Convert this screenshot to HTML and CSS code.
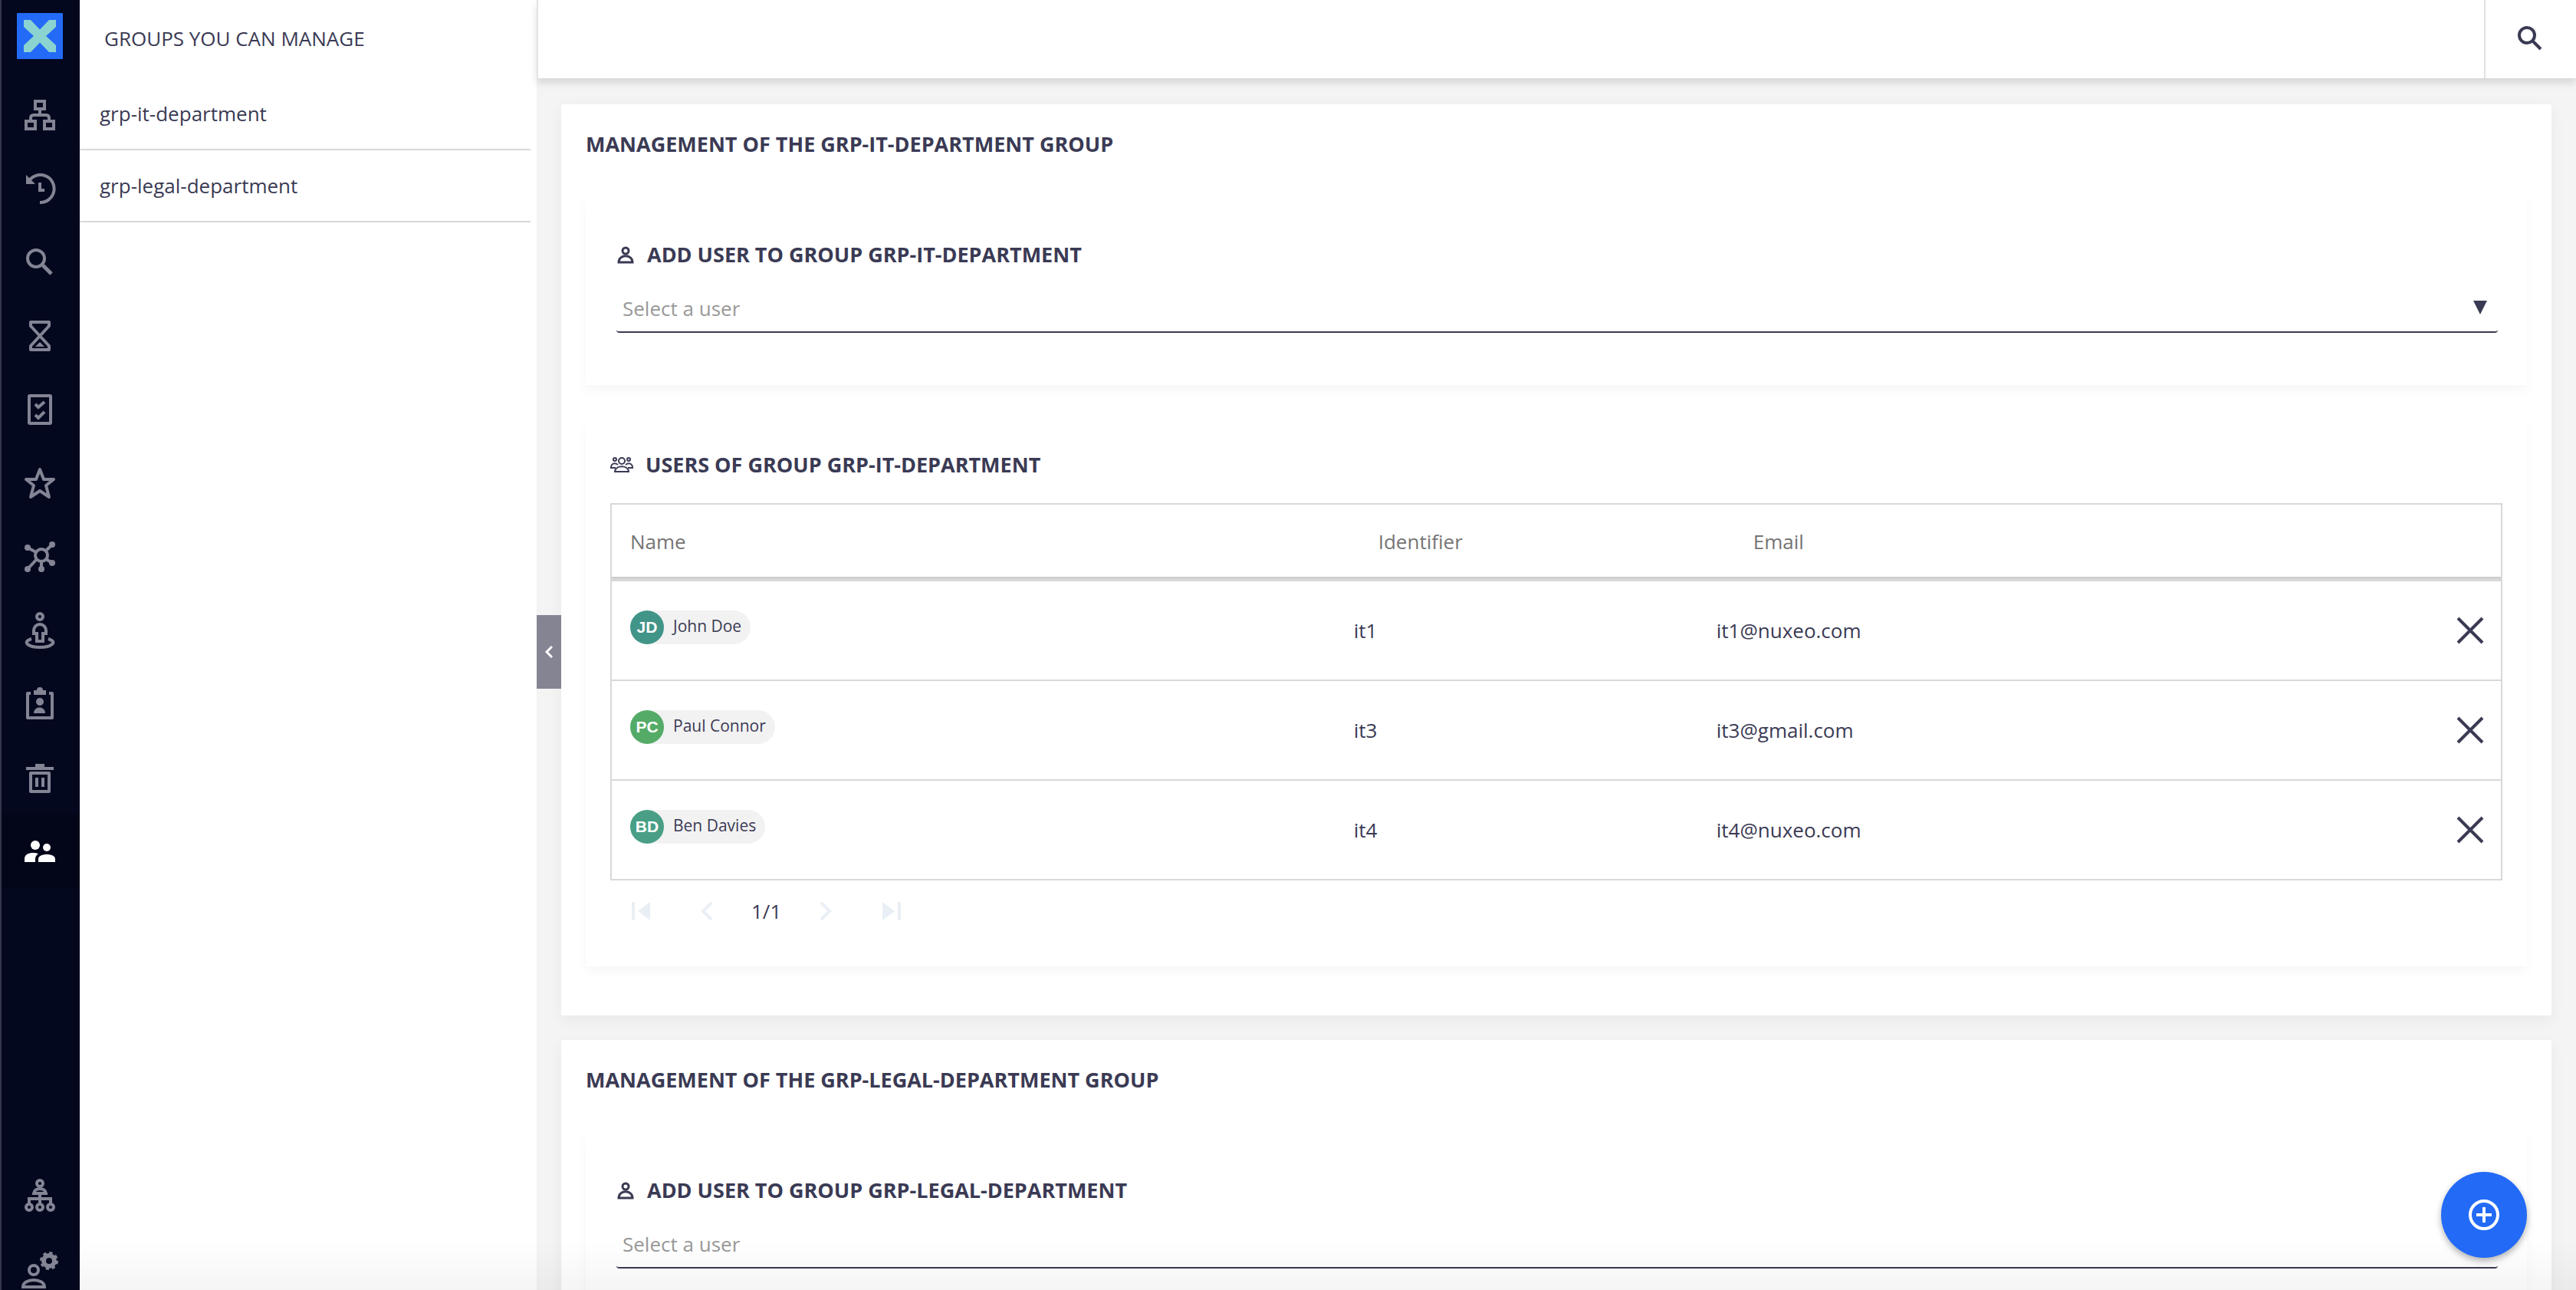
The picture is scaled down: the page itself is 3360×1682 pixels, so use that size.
FILE: index.html
```html
<!DOCTYPE html>
<html lang="en">
<head>
<meta charset="utf-8">
<title>Group management</title>
<link rel="stylesheet" href="styles.css">
</head>
<body>
<div class="app">
  <nav class="rail" aria-label="Main">
    <a class="rail-logo" href="#" aria-label="Home">
      <svg class="logo" viewBox="0 0 60 60"><rect width="60" height="60" rx="1" fill="#236bf7"/><path d="M9 9h9l12 12.500L42 9h9v9L38 30l13 12v9h-9L30 38.500 18 51H9v-9l13-12L9 18z" fill="#8bd3d0"/></svg>
    </a>
    <a class="rail-item" href="#" aria-label="Browse"><svg class="icon" viewBox="0 0 48 48" fill="none" stroke="currentColor" stroke-width="4"><rect x="18" y="6" width="12" height="10"/><rect x="6" y="32" width="12" height="10"/><rect x="30" y="32" width="12" height="10"/><path d="M24 16v8M12 32v-4q0-4 4-4h16q4 0 4 4v4"/></svg></a>
    <a class="rail-item" href="#" aria-label="Recently viewed"><svg class="icon" viewBox="0 0 48 48"><path d="M9 15A18 18 0 1 1 24 42" fill="none" stroke="currentColor" stroke-width="4"/><path d="M6 6v12h12z" fill="currentColor"/><path d="M24 16v10h6" fill="none" stroke="currentColor" stroke-width="4"/></svg></a>
    <a class="rail-item" href="#" aria-label="Search"><svg class="icon" viewBox="0 0 48 48" fill="none" stroke="currentColor"><circle cx="19" cy="19" r="11" stroke-width="4"/><path d="M28 28l11 11" stroke-width="5"/></svg></a>
    <a class="rail-item" href="#" aria-label="Expired"><svg class="icon" viewBox="0 0 48 48"><path d="M12 6h24v5L12 37v5h24v-5L12 11z" fill="none" stroke="currentColor" stroke-width="4" stroke-linejoin="round"/><path d="M18 38l6-6 6 6z" fill="currentColor"/></svg></a>
    <a class="rail-item" href="#" aria-label="Tasks"><svg class="icon" viewBox="0 0 48 48" fill="none" stroke="currentColor" stroke-width="4"><rect x="10" y="6" width="28" height="36" rx="1"/><path d="M18 17l4 4 8-7M18 31l4 4 8-8"/></svg></a>
    <a class="rail-item" href="#" aria-label="Favorites"><svg class="icon" viewBox="0 0 48 48" fill="none" stroke="currentColor" stroke-width="4" stroke-linejoin="round"><path d="M24 6l5 13h13L32 27l4 15-12-8-12 8 4-15L6 19h13z"/></svg></a>
    <a class="rail-item" href="#" aria-label="Collections"><svg class="icon" viewBox="0 0 48 48"><g fill="none" stroke="currentColor" stroke-width="4"><circle cx="26" cy="22" r="8"/><path d="M8 12l11 6M40 8l-8 8M8 40l12-13M26 30v10M40 32l-8-5"/></g><g fill="currentColor"><circle cx="8" cy="12" r="4"/><circle cx="40" cy="8" r="4"/><circle cx="8" cy="40" r="4"/><circle cx="26" cy="40" r="4"/><circle cx="40" cy="32" r="4"/></g></svg></a>
    <a class="rail-item" href="#" aria-label="Personal workspace"><svg class="icon" viewBox="0 0 48 48" fill="none" stroke="currentColor" stroke-width="4"><circle cx="24" cy="6" r="4"/><path d="M20 38V28h-4v-4a8 8 0 0 1 16 0v4h-4v10z"/><path d="M13 35C0 39 9 46 24 46s24-7 11-11"/></svg></a>
    <a class="rail-item" href="#" aria-label="Clipboard"><svg class="icon" viewBox="0 0 48 48"><path d="M12 10H8v32h32V10h-4" fill="none" stroke="currentColor" stroke-width="4" stroke-linejoin="round"/><g fill="currentColor"><path d="M16 6h4a4 4 0 0 1 8 0h4v6H16z"/><circle cx="24" cy="21" r="5"/><path d="M16 36c0-10 15-10 15 0z"/></g></svg></a>
    <a class="rail-item" href="#" aria-label="Trash"><svg class="icon" viewBox="0 0 48 48" fill="currentColor"><path d="M6 10h12V6h12v4h12v4H6z"/><path d="M18 24h4v12h-4zM26 24h4v12h-4z"/><path d="M12 18h24v24H12z" fill="none" stroke="currentColor" stroke-width="4" stroke-linejoin="round"/></svg></a>
    <a class="rail-item rail-item-active" href="#" aria-label="Group management"><svg class="icon" viewBox="0 0 48 48" fill="currentColor"><circle cx="18" cy="16" r="6"/><circle cx="33" cy="19" r="5"/><path d="M4 38v-4c0-9 12-9 18-7-3 2-4 5-4 7v4zM22 38v-4c0-8 22-8 22 0v4z"/></svg></a>
    <a class="rail-item rail-item-bottom" href="#" aria-label="Administration"><svg class="icon" viewBox="0 0 48 48" fill="none" stroke="currentColor" stroke-width="4"><circle cx="24" cy="9" r="4"/><path d="M16 22c1-8 15-8 16 0zM24 22v14M10 36v-7h28v7"/><circle cx="10" cy="40" r="4"/><circle cx="24" cy="40" r="4"/><circle cx="38" cy="40" r="4"/></svg></a>
    <a class="rail-item" href="#" aria-label="User settings"><svg class="icon" viewBox="0 0 48 48" fill="none" stroke="currentColor" stroke-width="4"><circle cx="16" cy="26" r="6"/><path d="M2 48c0-12 28-12 28 0z"/><circle cx="36" cy="14" r="7" stroke-width="6"/><circle cx="36" cy="14" r="10" stroke-dasharray="4 3.850"/></svg></a>
  </nav>

  <aside class="drawer">
    <h2 class="drawer-title">GROUPS YOU CAN MANAGE</h2>
    <ul class="group-list">
      <li><a class="group-link" href="#it">grp-it-department</a></li>
      <li><a class="group-link" href="#legal">grp-legal-department</a></li>
    </ul>
  </aside>

  <div class="main">
    <header class="topbar">
      <button class="search-button" type="button" aria-label="Search"><svg class="icon" viewBox="0 0 48 48" fill="none" stroke="currentColor"><circle cx="19" cy="19" r="10" stroke-width="4"/><path d="M27 27l10 10" stroke-width="4"/></svg></button>
    </header>
    <button class="drawer-toggle" type="button" aria-label="Collapse panel"><svg class="chevron" viewBox="0 0 10 16" fill="none" stroke="currentColor" stroke-width="3"><path d="M9 1L2 8l7 7"/></svg></button>

    <main class="content">
      <section class="card" id="it">
        <h1 class="card-title">MANAGEMENT OF THE GRP-IT-DEPARTMENT GROUP</h1>
        <div class="panel panel-add">
          <h2 class="panel-title"><svg class="user-icon" viewBox="0 0 24 24" fill="none" stroke="currentColor" stroke-width="3"><circle cx="12" cy="7" r="4"/><path d="M3 22c0-11 18-11 18 0z"/></svg><label for="user-it">ADD USER TO GROUP GRP-IT-DEPARTMENT</label></h2>
          <div class="picker">
            <select class="picker-select" id="user-it"><option>Select a user</option></select>
            <svg class="picker-arrow" viewBox="0 0 18 18" fill="currentColor"><path d="M0 0h18L9 18z"/></svg>
          </div>
        </div>
        <div class="panel panel-users">
          <h2 class="panel-title"><svg class="users-icon" viewBox="0 0 30 22" fill="none" stroke="currentColor" stroke-width="2"><circle cx="15" cy="6" r="4"/><circle cx="6" cy="4" r="2"/><circle cx="24" cy="4" r="2"/><path d="M6 20c1-9 17-9 18 0zM7 15H1c0-6 5-7 9-4M23 15h6c0-6-5-7-9-4"/></svg>USERS OF GROUP GRP-IT-DEPARTMENT</h2>
          <table class="users">
            <thead>
              <tr><th class="col-name">Name</th><th class="col-id">Identifier</th><th class="col-email">Email</th><th class="col-action"></th></tr>
            </thead>
            <tbody>
              <tr>
                <td class="name"><span class="chip"><span class="avatar avatar-jd">JD</span>John Doe</span></td>
                <td>it1</td><td>it1@nuxeo.com</td>
                <td class="action"><button class="remove" type="button" aria-label="Remove John Doe"><svg class="cross" viewBox="0 0 36 36"><path d="M2 2l32 32M34 2L2 34" stroke="currentColor" stroke-width="4"/></svg></button></td>
              </tr>
              <tr>
                <td class="name"><span class="chip"><span class="avatar avatar-pc">PC</span>Paul Connor</span></td>
                <td>it3</td><td>it3@gmail.com</td>
                <td class="action"><button class="remove" type="button" aria-label="Remove Paul Connor"><svg class="cross" viewBox="0 0 36 36"><path d="M2 2l32 32M34 2L2 34" stroke="currentColor" stroke-width="4"/></svg></button></td>
              </tr>
              <tr>
                <td class="name"><span class="chip"><span class="avatar avatar-bd">BD</span>Ben Davies</span></td>
                <td>it4</td><td>it4@nuxeo.com</td>
                <td class="action"><button class="remove" type="button" aria-label="Remove Ben Davies"><svg class="cross" viewBox="0 0 36 36"><path d="M2 2l32 32M34 2L2 34" stroke="currentColor" stroke-width="4"/></svg></button></td>
              </tr>
            </tbody>
          </table>
          <div class="pager">
            <button class="page-button" type="button" disabled aria-label="First page"><svg class="page-icon" viewBox="0 0 24 24" fill="currentColor"><path d="M0 0h4v24H0zM24 0v24L8 12z"/></svg></button>
            <button class="page-button" type="button" disabled aria-label="Previous page"><svg class="page-icon" viewBox="0 0 24 24" fill="none" stroke="currentColor" stroke-width="4"><path d="M18 1L7 12l11 11"/></svg></button>
            <span class="page-count">1/1</span>
            <button class="page-button" type="button" disabled aria-label="Next page"><svg class="page-icon" viewBox="0 0 24 24" fill="none" stroke="currentColor" stroke-width="4"><path d="M6 1l11 11L6 23"/></svg></button>
            <button class="page-button" type="button" disabled aria-label="Last page"><svg class="page-icon" viewBox="0 0 24 24" fill="currentColor"><path d="M20 0h4v24h-4zM0 0l16 12L0 24z"/></svg></button>
          </div>
        </div>
      </section>

      <section class="card" id="legal">
        <h1 class="card-title">MANAGEMENT OF THE GRP-LEGAL-DEPARTMENT GROUP</h1>
        <div class="panel panel-add">
          <h2 class="panel-title"><svg class="user-icon" viewBox="0 0 24 24" fill="none" stroke="currentColor" stroke-width="3"><circle cx="12" cy="7" r="4"/><path d="M3 22c0-11 18-11 18 0z"/></svg><label for="user-legal">ADD USER TO GROUP GRP-LEGAL-DEPARTMENT</label></h2>
          <div class="picker">
            <select class="picker-select" id="user-legal"><option>Select a user</option></select>
          </div>
        </div>
      </section>
    </main>
  </div>
  <div class="bottom-fade"></div>
  <button class="fab" type="button" aria-label="Create"><svg class="fab-icon" viewBox="0 0 40 40" fill="none" stroke="currentColor" stroke-width="4"><circle cx="20" cy="20" r="18"/><path d="M20 10v20M10 20h20"/></svg></button>
</div>
</body>
</html>
```
FILE: styles.css
```css
* { box-sizing: border-box; }

body {
  margin: 0;
  font-family: "Open Sans", "Noto Sans", sans-serif;
  font-size: 26px;
  line-height: 36px;
  color: #3a3a54;
  background: #f4f4f4;
}

h1, h2, ul { margin: 0; padding: 0; font-size: inherit; }
button { border: 0; padding: 0; background: none; color: inherit; font: inherit; }
svg { display: block; }

.app { display: flex; height: 100vh; overflow: hidden; }

/* Icon rail */
.rail {
  display: flex;
  flex-direction: column;
  flex: none;
  width: 104px;
  border-left: 2px solid #33354d;
  background: #04081f;
  color: #838494;
}
.rail-logo { display: flex; flex: none; justify-content: center; padding: 17px 2px 25px 0; }
.logo { width: 60px; height: 60px; }
.rail-item { display: flex; flex: none; height: 96px; padding-right: 2px; align-items: center; justify-content: center; color: inherit; }
.rail-item-active { background: #030618; color: #fff; }
.rail-item-bottom { margin-top: 352px; }
.icon { width: 48px; height: 48px; overflow: visible; }

/* Group drawer */
.drawer { flex: none; width: 596px; padding-right: 8px; background: #fff; }
.drawer-title { padding: 32px 32px 34px; font-weight: 400; }
.group-list { list-style: none; }
.group-link {
  display: block;
  height: 94px;
  padding: 28px 26px;
  border-bottom: 2px solid #d8d8d8;
  color: inherit;
  text-decoration: none;
}

/* Main column */
.main { position: relative; display: flex; flex: 1; flex-direction: column; min-width: 0; }
.topbar {
  z-index: 1;
  display: flex;
  flex: none;
  justify-content: flex-end;
  height: 102px;
  border-left: 2px solid #e2e2e2;
  background: #fff;
  box-shadow: 0 6px 10px rgba(0, 0, 0, .13);
}
.search-button { display: flex; width: 120px; align-items: center; justify-content: center; border-left: 2px solid #e2e2e2; }
.drawer-toggle {
  position: absolute;
  top: 802px;
  left: 0;
  display: flex;
  width: 32px;
  height: 96px;
  align-items: center;
  justify-content: center;
  background: #858493;
  color: #fff;
}
.chevron { width: 10px; height: 16px; }
.content { padding: 34px 32px; }

.card { margin-bottom: 32px; padding: 32px; background: #fff; box-shadow: 0 6px 20px rgba(0, 0, 0, .05); }
.card-title { padding: 2px 0 52px; font-size: 27px; font-weight: 700; }
.panel { background: #fff; box-shadow: 0 6px 14px rgba(0, 0, 0, .04); }
.panel-add { height: 244px; margin-bottom: 50px; padding: 56px 38px 0 40px; }
.panel-users { margin-bottom: 32px; padding: 36px 32px 32px; }
.panel-title { display: flex; align-items: center; gap: 16px; font-size: 27px; font-weight: 700; }
.user-icon { width: 24px; height: 24px; }
.users-icon { width: 30px; height: 22px; }

.picker { position: relative; margin-top: 20px; }
.picker-select {
  display: block;
  width: 100%;
  height: 64px;
  padding: 2px 8px 0;
  border: 0;
  border-bottom: 2px solid #3a3a54;
  border-radius: 4px;
  background: none;
  color: #999;
  font: inherit;
  appearance: none;
}
.picker-arrow { position: absolute; top: 22px; right: 14px; width: 18px; height: 18px; }

/* User table */
.users { width: 100%; margin-top: 32px; border: 2px solid #d8d8d8; border-spacing: 0; table-layout: fixed; }
.users th { height: 100px; padding: 0 24px; border-bottom: 4px solid #d8d8d8; box-shadow: inset 0 -2px #ccc; color: #757575; font-weight: 400; text-align: left; }
.users .col-name { width: 38.3%; }
.users .col-id { width: 19.2%; padding-left: 56px; }
.users .col-email { padding-left: 72px; }
.users .col-action { width: 120px; }
.users td { height: 130px; padding: 0 24px; border-bottom: 2px solid #d8d8d8; }
.users .name { padding-bottom: 8px; }
.users .action { padding-right: 22px; }
.users tbody tr:last-child td { height: 128px; border-bottom: 0; }
.chip {
  display: inline-flex;
  height: 44px;
  padding-right: 12px;
  border-radius: 22px;
  background: #f2f2f2;
  font-size: 21px;
  line-height: 40px;
  vertical-align: middle;
}
.avatar {
  width: 44px;
  height: 44px;
  margin-right: 12px;
  border-radius: 50%;
  color: #fff;
  font: 700 21px/44px "Liberation Sans", Arial, sans-serif;
  text-align: center;
}
.avatar-jd { background: #419488; }
.avatar-pc { background: #54ab68; }
.avatar-bd { background: #489f86; }
.remove { display: block; margin-left: auto; }
.cross { width: 36px; height: 36px; }

.pager { display: flex; align-items: center; gap: 6px; margin: 22px 0; }
.page-button { display: flex; width: 80px; height: 36px; align-items: center; justify-content: center; color: #e9eff4; }
.page-icon { width: 24px; height: 24px; }
.page-count { padding: 0 12px; }

.bottom-fade { position: fixed; right: 0; bottom: 0; left: 104px; height: 64px; background: linear-gradient(transparent, rgba(0, 0, 0, .04)); }
.fab {
  position: fixed;
  right: 64px;
  bottom: 42px;
  display: flex;
  width: 112px;
  height: 112px;
  align-items: center;
  justify-content: center;
  border-radius: 50%;
  background: #236bf7;
  color: #fff;
  box-shadow: 0 4px 8px rgba(0, 0, 0, .3);
}
.fab-icon { width: 40px; height: 40px; }
```
